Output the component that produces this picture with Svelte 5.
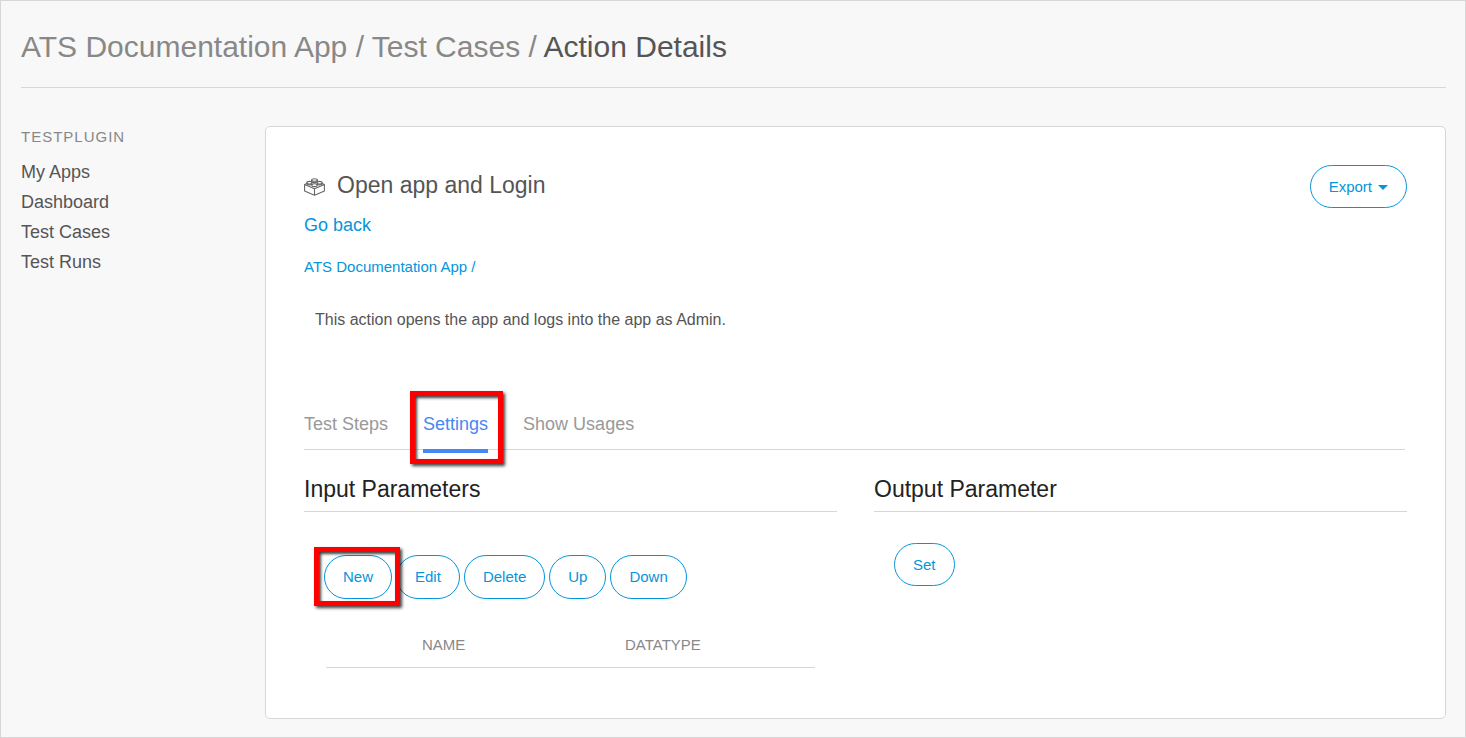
<script>
  const navItems = ['My Apps', 'Dashboard', 'Test Cases', 'Test Runs'];
  const tabs = ['Test Steps', 'Settings', 'Show Usages'];
  const actions = ['New', 'Edit', 'Delete', 'Up', 'Down'];
  let active = $state('Settings');
</script>

<div class="page">
  <header>
    <h1>
      <a href="#app">ATS Documentation App</a> / <a href="#cases">Test Cases</a> / <span>Action Details</span>
    </h1>
  </header>

  <div class="body">
    <nav>
      <h2>TESTPLUGIN</h2>
      <ul>
        {#each navItems as item}
          <li><a href="#nav">{item}</a></li>
        {/each}
      </ul>
    </nav>

    <main>
      <div class="top">
        <div class="intro">
          <div class="title">
            <svg width="21" height="18" viewBox="0 0 21 18" fill="none" stroke="#666" stroke-width="1.100" stroke-linejoin="round" aria-hidden="true">
              <path d="M.6 6.500V13L10.500 17.300 20.400 13V6.500L10.500 10.800ZM10.500 10.800V17" />
              <path d="M.6 6.500 3 5.400M20.400 6.500 18 5.400" />
              <path d="M7.600 2V3.700C8.300 4.900 12.700 4.900 13.400 3.700V2" />
              <ellipse cx="10.500" cy="2" rx="2.900" ry="1.300" />
              <path d="M2.900 4.800V6C3.700 7.200 7.500 7.200 8.100 6M12.900 6C13.500 7.200 17.300 7.200 18.100 6V4.800" />
              <ellipse cx="5.500" cy="4.700" rx="2.600" ry="1.300" />
              <ellipse cx="15.500" cy="4.700" rx="2.600" ry="1.300" />
              <ellipse cx="10.500" cy="7.200" rx="2.700" ry="1.400" />
            </svg>
            <h3>Open app and Login</h3>
          </div>
          <a class="back" href="#back">Go back</a>
          <a class="crumb" href="#app">ATS Documentation App /</a>
          <p>This action opens the app and logs into the app as Admin.</p>
        </div>
        <button class="pill short export">
          Export
          <svg width="10" height="5" viewBox="0 0 10 5" aria-hidden="true"><path d="M0 0H10L5 5Z" fill="#0595db" /></svg>
        </button>
      </div>

      <div class="tabs" role="tablist">
        {#each tabs as tab}
          <button
            role="tab"
            aria-selected={active === tab}
            class:active={active === tab}
            class:marked={tab === 'Settings'}
            onclick={() => (active = tab)}>{tab}</button>
        {/each}
      </div>

      <div class="columns">
        <section>
          <h4>Input Parameters</h4>
          <div class="grid-box">
            <div class="actions">
              {#each actions as action}
                <button class="pill" class:marked={action === 'New'}>{action}</button>
              {/each}
            </div>
            <table>
              <thead>
                <tr><td></td><th class="name" scope="col">NAME</th><th scope="col">DATATYPE</th></tr>
              </thead>
            </table>
          </div>
        </section>
        <section>
          <h4>Output Parameter</h4>
          <button class="pill short set">Set</button>
        </section>
      </div>
    </main>
  </div>
</div>

<style>
  :global(body) {
    font-family: 'Liberation Sans', Arial, sans-serif;
    color: #555;
  }
  * {
    box-sizing: border-box;
  }
  h1, h2, h3, h4, p, ul {
    margin: 0;
    padding: 0;
    font-weight: 400;
  }
  a {
    color: inherit;
    text-decoration: none;
  }
  button {
    font-family: inherit;
    cursor: pointer;
  }
  .page {
    display: flex;
    flex-direction: column;
    min-height: 100vh;
    padding: 0 19px 18px 20px;
    background: #f8f8f8;
    border: 1px solid #d7d7d7;
  }
  header {
    padding: 28px 0 22px;
    border-bottom: 1px solid #d7d7d7;
  }
  h1 {
    font-size: 30px;
    line-height: 36px;
    color: #888;
  }
  h1 span {
    color: #555;
  }
  .body {
    display: flex;
    flex: 1;
    padding-top: 38px;
  }
  nav {
    flex: 0 0 244px;
  }
  h2 {
    font-size: 15px;
    line-height: 22px;
    letter-spacing: 1px;
    color: #888;
    margin-bottom: 9px;
  }
  ul {
    list-style: none;
  }
  li {
    font-size: 18px;
    line-height: 30px;
  }
  main {
    flex: 1;
    min-width: 0;
    padding: 38px 38px 50px;
    background: #fff;
    border: 1px solid #d7d7d7;
    border-radius: 5px;
  }
  .top {
    display: flex;
    justify-content: space-between;
    align-items: flex-start;
  }
  .intro {
    display: flex;
    flex-direction: column;
    align-items: flex-start;
  }
  .title {
    display: flex;
    align-items: center;
    gap: 12px;
  }
  .title svg {
    margin-top: 4px;
  }
  h3 {
    font-size: 23px;
    line-height: 40px;
  }
  .back {
    font-size: 18px;
    line-height: 40px;
    color: #0595db;
  }
  .crumb {
    font-size: 15px;
    line-height: 44px;
    color: #0595db;
  }
  p {
    padding: 20px 11px;
    font-size: 16px;
    line-height: 22px;
  }
  .pill {
    height: 44px;
    padding: 0 18px 2px;
    font-size: 15px;
    color: #0595db;
    background: #fff;
    border: 1px solid #0595db;
    border-radius: 22px;
  }
  .short {
    height: 43px;
    padding-bottom: 0;
  }
  .export {
    display: flex;
    align-items: center;
    gap: 6px;
  }
  .export svg {
    margin-top: 2px;
  }
  .tabs {
    display: flex;
    gap: 35px;
    margin: 46px 2px 0 0;
    border-bottom: 1px solid #d7d7d7;
  }
  .tabs button {
    height: 56px;
    margin-bottom: -4px;
    padding: 2px 0 0;
    font-size: 18px;
    color: #999;
    background: none;
    border: 0;
    border-bottom: 4px solid transparent;
  }
  .tabs .active {
    color: #4488f6;
    border-color: #4488f6;
  }
  .marked {
    position: relative;
  }
  .marked::after {
    content: '';
    position: absolute;
    z-index: 1;
    inset: -6px -15px -15px -13px;
    border: 5px solid #f00;
    box-shadow: 2px 2px 3px rgba(0, 0, 0, 0.75), inset 2px 2px 3px rgba(0, 0, 0, 0.75);
    pointer-events: none;
  }
  .pill.marked::after {
    inset: -9px -9px -8px -11px;
  }
  .columns {
    display: grid;
    grid-template-columns: 1fr 1fr;
    gap: 37px;
    padding-top: 24px;
  }
  h4 {
    font-size: 23px;
    line-height: 30px;
    padding-bottom: 7px;
    color: #222;
    border-bottom: 1px solid #d7d7d7;
  }
  .grid-box {
    padding: 43px 22px 0 20px;
  }
  .actions {
    display: flex;
    gap: 4px;
  }
  table {
    width: 489px;
    max-width: 100%;
    margin: 24px 0 0 2px;
    border-collapse: collapse;
    table-layout: fixed;
  }
  thead {
    border-bottom: 1px solid #d7d7d7;
  }
  td {
    width: 96px;
    padding: 0;
  }
  th {
    height: 44px;
    padding: 0;
    font-size: 15px;
    font-weight: 400;
    text-align: left;
    color: #888;
  }
  .name {
    width: 203px;
  }
  .set {
    margin: 31px 0 0 20px;
  }
</style>
